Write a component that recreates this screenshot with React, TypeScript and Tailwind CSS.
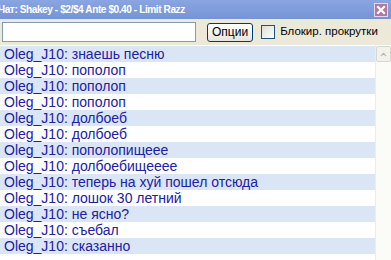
import { ChevronUp } from 'lucide-react';

const messages = [
  'знаешь песню',
  'пополоп',
  'пополоп',
  'пополоп',
  'долбоеб',
  'долбоеб',
  'пополопищеее',
  'долбоебищееее',
  'теперь на хуй пошел отсюда',
  'лошок 30 летний',
  'не ясно?',
  'съебал',
  'сказанно',
];

const App = () => {
  return (
    <div className="w-[391px] h-[260px] overflow-hidden bg-[#ece9d8] flex flex-col font-['Liberation_Sans',Arial,sans-serif]">
      {/* Title bar */}
      <div className="h-[19px] shrink-0 bg-gradient-to-b from-[#89a6e2] to-[#7693d6] flex items-center justify-between">
        <span className="whitespace-nowrap text-white text-[11.5px] font-bold tracking-[-0.5px] -ml-[2px] scale-x-[0.88] origin-left">
          Чат: Shakey - $2/$4 Ante $0.40 - Limit Razz
        </span>
        <svg width="14" height="14" viewBox="0 0 14 14" className="mr-[3px] shrink-0">
          <rect x="0.5" y="0.5" width="13" height="13" fill="#b07a9e" stroke="#e6d6ea" />
          <path d="M4 4 L10 10 M10 4 L4 10" stroke="white" strokeWidth="2.2" strokeLinecap="square" />
        </svg>
      </div>

      {/* Toolbar */}
      <div className="h-[26px] shrink-0 flex items-center pl-[2px]">
        <input className="w-[194px] h-[20px] bg-white border border-[#7f9db9] outline-none" />
        <button className="ml-[11px] h-[19px] px-[4px] rounded-[3px] border border-[#003c74] bg-gradient-to-b from-white to-[#e6e5dd] text-[12px] text-black leading-none">
          Опции
        </button>
        <span className="ml-[8px] w-[14px] h-[14px] border border-[#1c5180] bg-gradient-to-br from-[#dcdcd7] to-white" />
        <span className="ml-[5px] text-[11.5px] text-black">Блокир. прокрутки</span>
      </div>

      {/* Chat list */}
      <div className="flex-1 flex bg-white">
        <div className="flex-1 flex flex-col pt-px">
          {messages.map((m, i) => (
            <div
              key={i}
              className={`h-[16px] pl-[4px] flex items-center text-[14px] text-[#2020a4] whitespace-nowrap ${i % 2 === 0 ? 'bg-[#dae6f6]' : 'bg-white'}`}
            >
              Oleg_J10: {m}
            </div>
          ))}
        </div>
        {/* Scrollbar */}
        <div className="w-[16px] bg-[#fbfbf7] border-l border-[#eeede5] flex flex-col pt-px">
          <div className="h-[16px] w-[15px] bg-[#f3f1ec] border border-[#d7d6cf] rounded-[2px] flex items-center justify-center">
            <ChevronUp className="w-[9px] h-[9px] text-[#b5b3aa]" strokeWidth={3} />
          </div>
        </div>
      </div>
    </div>
  );
};

export default App;
